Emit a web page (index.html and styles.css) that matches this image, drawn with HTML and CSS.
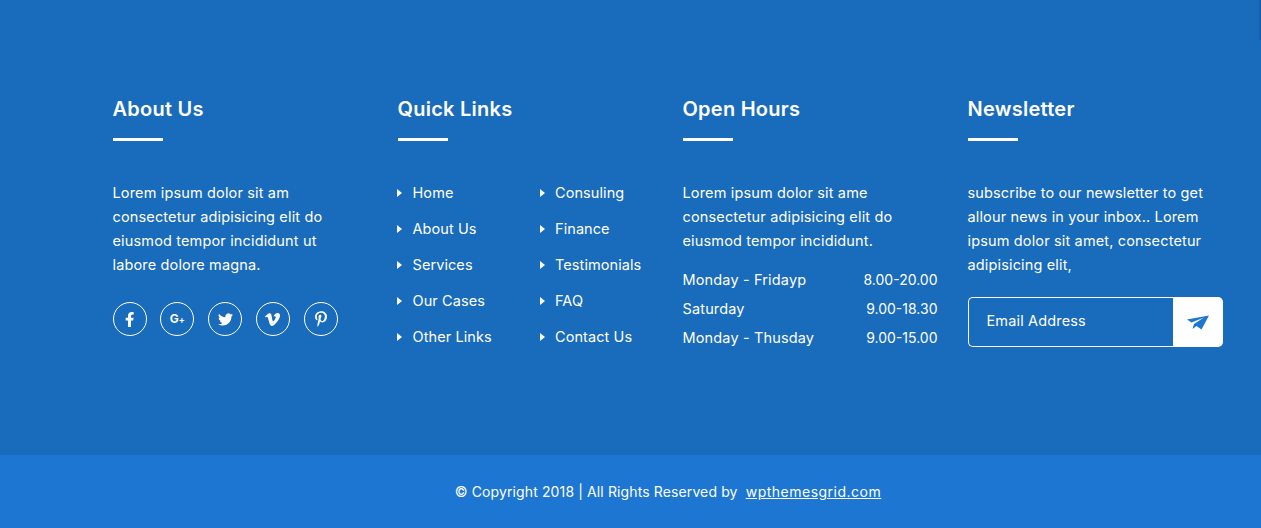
FILE: index.html
```html
<!DOCTYPE html>
<html lang="en">
<head>
<meta charset="utf-8">
<title>Footer</title>
<link rel="stylesheet" href="styles.css">
</head>
<body>
<footer class="footer">
  <div class="edge"></div>
  <div class="footer-main">
    <div class="columns">
      <section class="col">
        <h3 class="title">About Us</h3>
        <p class="text">Lorem ipsum dolor sit am<br>consectetur adipisicing elit do<br>eiusmod tempor incididunt ut<br>labore dolore magna.</p>
        <div class="social">
          <a class="soc"><svg class="ic-f" viewBox="0 0 320 512"><path d="M279 288l14-93h-89v-60c0-25 12-50 52-50h41V7s-37-7-72-7c-73 0-121 45-121 125v70H22v93h82v224h100V288z"/></svg></a>
          <a class="soc"><span class="gplus">G<small>+</small></span></a>
          <a class="soc"><svg class="ic-t" viewBox="0 0 24 24"><path d="M23.953 4.57a10 10 0 01-2.825.775 4.958 4.958 0 002.163-2.723c-.951.555-2.005.959-3.127 1.184a4.92 4.92 0 00-8.384 4.482C7.69 8.095 4.067 6.13 1.64 3.162a4.822 4.822 0 00-.666 2.475c0 1.71.87 3.213 2.188 4.096a4.904 4.904 0 01-2.228-.616v.06a4.923 4.923 0 003.946 4.827 4.996 4.996 0 01-2.212.085 4.936 4.936 0 004.604 3.417 9.867 9.867 0 01-6.102 2.105c-.39 0-.779-.023-1.17-.067a13.995 13.995 0 007.557 2.209c9.053 0 13.998-7.496 13.998-13.985 0-.21 0-.42-.015-.63A9.935 9.935 0 0024 4.59z"/></svg></a>
          <a class="soc"><svg class="ic-v" viewBox="0 0 24 24"><path d="M23.9765 6.4168c-.105 2.338-1.739 5.5429-4.894 9.6088-3.2679 4.247-6.0258 6.3699-8.2898 6.3699-1.409 0-2.578-1.294-3.553-3.881l-1.9179-7.1138c-.719-2.584-1.488-3.878-2.312-3.878-.179 0-.806.378-1.8809 1.132L0 7.2099a315.8 315.8 0 003.501-3.1279c1.579-1.368 2.765-2.085 3.5539-2.159 1.867-.18 3.016 1.1 3.447 3.838.465 2.953.789 4.789.971 5.5069.5389 2.45 1.1309 3.674 1.7759 3.674.502 0 1.256-.796 2.265-2.385 1.004-1.589 1.54-2.797 1.612-3.628.144-1.371-.395-2.061-1.614-2.061-.574 0-1.167.121-1.777.391 1.186-3.8679 3.434-5.7568 6.7619-5.6368 2.4729.06 3.6279 1.664 3.4929 4.7969z"/></svg></a>
          <a class="soc"><svg class="ic-p" viewBox="0 0 384 512"><path d="M204 6.5C101.4 6.5 0 74.9 0 185.6 0 256 39.6 296 63.6 296c9.9 0 15.6-27.6 15.6-35.4 0-9.3-23.7-29.1-23.7-67.8 0-80.4 61.2-137.4 140.4-137.4 68.1 0 118.5 38.7 118.5 109.8 0 53.1-21.3 152.7-90.3 152.7-24.9 0-46.2-18-46.2-43.8 0-37.8 26.4-74.4 26.4-113.4 0-66.2-93.9-54.2-93.9 25.8 0 16.8 2.1 35.4 9.6 50.7-13.8 59.4-42 147.9-42 209.1 0 18.9 2.7 37.5 4.5 56.4 3.4 3.8 1.7 3.4 6.9 1.5 50.4-69 48.6-82.5 71.4-172.8 12.3 23.4 44.1 36 69.3 36 106.2 0 153.9-103.5 153.9-196.8C384 71.3 298.2 6.5 204 6.5z"/></svg></a>
        </div>
      </section>
      <section class="col">
        <h3 class="title">Quick Links</h3>
        <div class="links">
          <ul class="list">
            <li>Home</li><li>About Us</li><li>Services</li><li>Our Cases</li><li>Other Links</li>
          </ul>
          <ul class="list">
            <li>Consuling</li><li>Finance</li><li>Testimonials</li><li>FAQ</li><li>Contact Us</li>
          </ul>
        </div>
      </section>
      <section class="col">
        <h3 class="title">Open Hours</h3>
        <p class="text">Lorem ipsum dolor sit ame<br>consectetur adipisicing elit do<br>eiusmod tempor incididunt.</p>
        <div class="hours">
          <div class="hour"><span>Monday - Fridayp</span><span class="time">8.00-20.00</span></div>
          <div class="hour"><span>Saturday</span><span class="time">9.00-18.30</span></div>
          <div class="hour"><span>Monday - Thusday</span><span class="time">9.00-15.00</span></div>
        </div>
      </section>
      <section class="col">
        <h3 class="title">Newsletter</h3>
        <p class="text">subscribe to our newsletter to get<br>allour news in your inbox.. Lorem<br>ipsum dolor sit amet, consectetur<br>adipisicing elit,</p>
        <div class="subscribe">
          <span class="email">Email Address</span>
          <span class="send"><svg viewBox="0 0 22 15"><path d="M22 .5L0 4.5l4.5 3L17 2.5 7 9l-1.500 5 4-3 5 3.500z"/></svg></span>
        </div>
      </section>
    </div>
  </div>
  <div class="footer-bottom">
    <p>© Copyright 2018 | All Rights Reserved by &nbsp;<a class="credit">wpthemesgrid.com</a></p>
  </div>
</footer>
</body>
</html>
```
FILE: styles.css
```css
* { box-sizing: border-box; }
html, body { margin: 0; padding: 0; }
body {
  font-family: Inter, "Open Sans", sans-serif;
  font-size: 14.5px;
  letter-spacing: 0.15px;
  color: #fff;
  overflow: hidden;
  height: 528px;
}
.footer { position: relative; }
.edge {
  position: absolute;
  top: 0;
  right: 0;
  width: 3px;
  height: 40px;
  background: linear-gradient(to right, rgba(0, 40, 90, 0), rgba(0, 40, 90, 0.25));
}
.footer-main {
  background: #196bbc;
  height: 455px;
  padding: 96px 0 0 97.5px;
}
.columns {
  display: grid;
  grid-template-columns: repeat(4, 285px);
}
.col { padding: 0 15px; }
.title {
  margin: 0 0 40px;
  font-size: 20px;
  letter-spacing: 0.25px;
  line-height: 26px;
  font-weight: 600;
  padding-bottom: 15px;
  position: relative;
  height: 45px;
}
.title::after {
  content: "";
  position: absolute;
  left: 0;
  bottom: 0;
  width: 50px;
  height: 3px;
  background: #fff;
}
.text {
  margin: 0;
  line-height: 24px;
}
.social {
  display: flex;
  gap: 13.75px;
  margin-top: 25px;
}
.soc {
  width: 34px;
  height: 34px;
  flex: none;
  border: 1px solid #fff;
  border-radius: 50%;
  display: flex;
  align-items: center;
  justify-content: center;
}
.soc svg { fill: #fff; display: block; }
.ic-f { height: 15px; }
.ic-t { width: 15px; height: 15px; }
.ic-v { width: 15px; height: 15px; }
.ic-p { height: 16px; }
.gplus { font-size: 12px; font-weight: 700; line-height: 1; letter-spacing: 0; }
.gplus small { font-size: 9px; }
.links {
  display: grid;
  grid-template-columns: 142.5px 142.5px;
}
.list {
  list-style: none;
  margin: 0;
  padding: 0;
  letter-spacing: 0.08px;
}
.list li {
  position: relative;
  height: 24px;
  line-height: 24px;
  margin-bottom: 12px;
  padding-left: 15px;
}
.list li::before {
  content: "";
  position: absolute;
  left: -0.5px;
  top: 8px;
  border-left: 5px solid #fff;
  border-top: 4px solid transparent;
  border-bottom: 4px solid transparent;
}
.hours { margin-top: 12px; }
.hour {
  display: flex;
  justify-content: space-between;
  height: 29px;
  line-height: 29px;
}
.time { font-size: 14px; letter-spacing: 0; }
.subscribe {
  display: flex;
  height: 50px;
  width: 255px;
  margin-top: 20px;
}
.email {
  flex: 1;
  padding-left: 18px;
  line-height: 46px;
  border: 1px solid #fff;
  border-right: 0;
  border-radius: 5px 0 0 5px;
}
.send {
  width: 50px;
  background: #fff;
  border-radius: 0 5px 5px 0;
  display: flex;
  align-items: center;
  justify-content: center;
}
.send svg { width: 22px; height: 15px; fill: #1c76d2; display: block; }
.footer-bottom {
  background: #1c76d2;
  height: 73px;
  padding-left: 75px;
  display: flex;
  align-items: center;
  justify-content: center;
  font-size: 14px;
  letter-spacing: 0.12px;
}
.footer-bottom p { margin: 0; }
.credit { text-decoration: underline; letter-spacing: 0.5px; }
```
